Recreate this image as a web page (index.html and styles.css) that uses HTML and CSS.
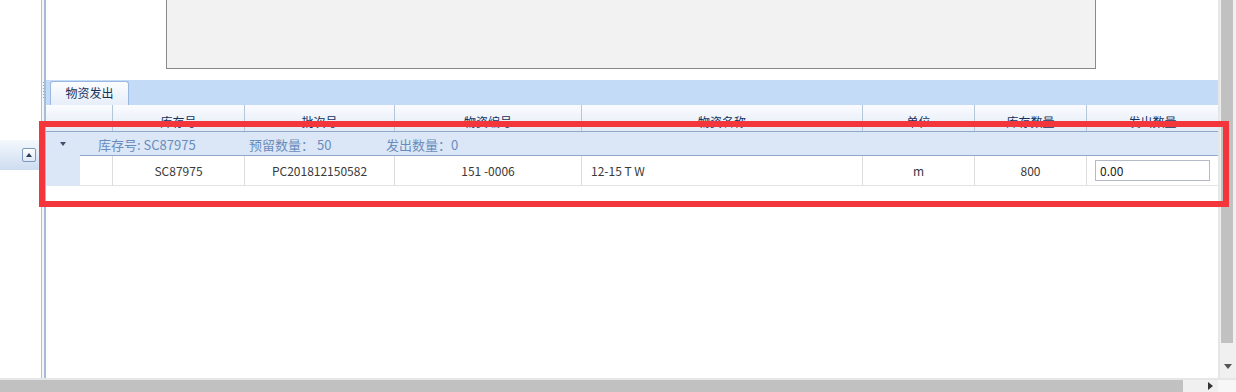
FILE: index.html
```html
<!DOCTYPE html>
<html lang="zh">
<head>
    <meta charset="UTF-8">
    <title>物资发出</title>
    <link rel="stylesheet" href="styles.css">
</head>
<body>
    <div class="app">
        <div class="main">
            <div class="west">
                <div class="west-bar">
                    <span class="collapse-btn"></span>
                </div>
            </div>
            <div class="splitter"><span class="grip"></span></div>
            <div class="center">
                <div class="top-area">
                    <div class="preview-box"></div>
                </div>
                <div class="tab-strip">
                    <div class="tab">物资发出</div>
                </div>
                <div class="grid-head grid-cols">
                    <div class="hcell"></div>
                    <div class="hcell"></div>
                    <div class="hcell">库存号</div>
                    <div class="hcell">批次号</div>
                    <div class="hcell">物资编号</div>
                    <div class="hcell">物资名称</div>
                    <div class="hcell">单位</div>
                    <div class="hcell">库存数量</div>
                    <div class="hcell">发出数量</div>
                </div>
                <div class="group-row">
                    <span class="group-arrow"></span>
                    <span class="g1">库存号: SC87975</span>
                    <span class="g2">预留数量： 50</span>
                    <span>发出数量：0</span>
                </div>
                <div class="data-row grid-cols">
                    <div class="cell indent"></div>
                    <div class="cell"></div>
                    <div class="cell">SC87975</div>
                    <div class="cell">PC201812150582</div>
                    <div class="cell">151 -0006</div>
                    <div class="cell left">12-15 T W</div>
                    <div class="cell">m</div>
                    <div class="cell">800</div>
                    <div class="cell last"><input class="qty" type="text" value="0.00"></div>
                </div>
            </div>
            <div class="vscroll">
                <div class="vthumb"></div>
                <span class="arrow-down"></span>
            </div>
        </div>
        <div class="hscroll">
            <div class="hthumb"></div>
            <span class="arrow-right"></span>
            <div class="corner"></div>
        </div>
    </div>

    <!-- marco rojo de anotación -->
    <div class="highlight"></div>
</body>
</html>
```

FILE: styles.css
```css
body {
    margin: 0;
    width: 1236px;
    height: 392px;
    overflow: hidden;
    background: #fff;
    font-family: "Noto Sans CJK SC", "Open Sans", sans-serif;
    font-size: 12px;
    color: #333;
}

.app {
    display: flex;
    flex-direction: column;
    height: 392px;
}

.main {
    display: flex;
    height: 378px;
}

/* panel izquierdo */
.west {
    width: 41px;
    padding-top: 140px;
    box-sizing: border-box;
}

.west-bar {
    height: 30px;
    background: linear-gradient(#f4f8fd, #cddcf0);
    display: flex;
    align-items: center;
    padding-left: 22px;
}

.collapse-btn {
    width: 12px;
    height: 12px;
    border: 1px solid #7c97c0;
    border-radius: 2px;
    background: linear-gradient(#fdfeff, #dde7f4);
    display: flex;
    align-items: center;
    justify-content: center;
}

.collapse-btn::after {
    content: "";
    border-left: 3px solid transparent;
    border-right: 3px solid transparent;
    border-bottom: 4px solid #2d3b55;
}

.splitter {
    width: 2px;
    border-left: 1px solid #aebfd8;
    border-right: 2px solid #a9bcd6;
    background: #f4f6fa;
    padding-top: 82px;
}

.grip {
    display: block;
    width: 1px;
    height: 18px;
    margin-left: 1px;
    background: repeating-linear-gradient(#8ea6c6 0 1px, transparent 1px 3px);
}

.center {
    flex: 1;
    display: flex;
    flex-direction: column;
}

.top-area {
    height: 80px;
}

.preview-box {
    margin-left: 120px;
    width: 930px;
    height: 69px;
    box-sizing: border-box;
    background: #f2f2f2;
    border: 1px solid #8a8a8a;
    border-top: none;
}

/* pestañas */
.tab-strip {
    height: 25px;
    background: #c4dbf8;
    padding: 1px 0 0 4px;
    box-sizing: border-box;
    display: flex;
    align-items: flex-end;
}

.tab {
    width: 77px;
    height: 23px;
    line-height: 22px;
    text-align: center;
    color: #15325f;
    background: linear-gradient(#fbfdff, #e6eef9);
    border: 1px solid #9ab7df;
    border-bottom: none;
    border-radius: 3px 3px 0 0;
}

/* tabla */
.grid-cols {
    display: grid;
    grid-template-columns: 34px 33px 132px 150px 187px 281px 112px 112px 131px;
}

.grid-head {
    height: 26px;
    background: linear-gradient(#fafcff, #e3eaf5);
    border-bottom: 1px solid #8fa9cc;
}

.hcell {
    border-right: 1px solid #b4c5dc;
    text-align: center;
    line-height: 24px;
    padding-top: 5px;
    color: #15325f;
    overflow: hidden;
}

.hcell:first-child {
    border-right: none;
}

.hcell:last-child {
    border-right: none;
}

.group-row {
    height: 24px;
    background: #dbe7f6;
    display: flex;
    align-items: center;
    font-size: 13px;
    color: #6a8cbc;
    padding-left: 14px;
    box-sizing: border-box;
    position: relative;
}

.group-row::after {
    content: "";
    position: absolute;
    left: 34px;
    right: 0;
    bottom: 0;
    height: 1px;
    background: #8fa9cc;
}

.group-arrow {
    width: 0;
    height: 0;
    border-left: 3px solid transparent;
    border-right: 3px solid transparent;
    border-top: 4px solid #3d4f6e;
    margin-right: 32px;
}

.g1 {
    width: 151px;
}

.g2 {
    width: 137px;
}

.data-row {
    height: 30px;
}

.cell {
    border-right: 1px solid #dcdcdc;
    border-bottom: 1px solid #e4e4e4;
    text-align: center;
    line-height: 29px;
    color: #3a3a3a;
}

.cell.left {
    text-align: left;
    padding-left: 9px;
}

.cell.indent {
    background: #dbe7f6;
    border-right: none;
    border-bottom: none;
}

.cell.last {
    border-right: none;
    text-align: left;
    padding: 4px 0 0 8px;
    line-height: normal;
}

.qty {
    width: 115px;
    height: 21px;
    box-sizing: border-box;
    border: 1px solid #b5bac8;
    font-family: "Noto Sans CJK SC", "Open Sans", sans-serif;
    font-size: 12px;
    color: #222;
    padding: 0 4px;
    margin: 0;
}

/* barras de desplazamiento */
.vscroll {
    width: 18px;
    background: #f0f0f0;
    border-left: 2px solid #e6e6e6;
    box-sizing: border-box;
    display: flex;
    flex-direction: column;
    align-items: flex-start;
}

.vthumb {
    width: 12px;
    margin-left: 1px;
    height: 343px;
    background: #c1c1c1;
}

.arrow-down {
    margin: 21px 0 0 4px;
    border-left: 4px solid transparent;
    border-right: 4px solid transparent;
    border-top: 5px solid #555;
}

.hscroll {
    height: 14px;
    display: flex;
    align-items: stretch;
    background: #f0f0f0;
    border-top: 2px solid #e6e6e6;
    box-sizing: border-box;
}

.hthumb {
    width: 1183px;
    background: #c1c1c1;
}

.arrow-right {
    align-self: center;
    margin-left: 25px;
    border-top: 4px solid transparent;
    border-bottom: 4px solid transparent;
    border-left: 5px solid #333;
}

.corner {
    margin-left: auto;
    width: 18px;
    background: #f7f7f7;
}

.highlight {
    position: absolute;
    left: 39px;
    top: 121px;
    width: 1190px;
    height: 86px;
    box-sizing: border-box;
    border: 6px solid #f2363c;
}
```
